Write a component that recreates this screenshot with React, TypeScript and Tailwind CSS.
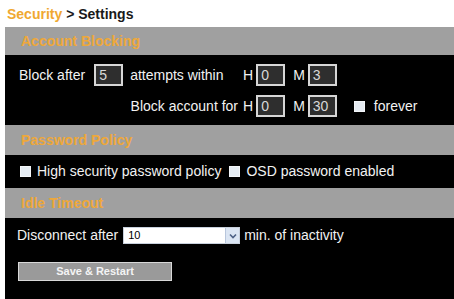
export default function App() {
  const font = { fontFamily: '"Liberation Sans", Arial, sans-serif' };

  return (
    <div className="w-[454px] h-[299px] bg-white pl-[5px] overflow-hidden" style={font}>
      {/* Breadcrumb */}
      <div className="h-[27px] flex items-center pl-[2px] text-[14px] font-bold leading-none">
        <span className="text-[#f0a830]">Security</span>
        <span className="text-[#1a1a1a]">&nbsp;&gt; Settings</span>
      </div>

      <div className="bg-black h-[272px] flex flex-col text-[14px] text-[#f2f2f2]">
        {/* Account Blocking */}
        <SectionHeader title="Account Blocking" h="h-[28px]" />
        <div className="h-[70px] pt-[9px] pl-[14px] flex flex-col gap-[9px]">
          <div className="flex items-center h-[22px]">
            <div className="w-[224px] flex items-center">
              <span>Block after</span>
              <NumBox value="5" className="ml-[9px]" />
              <span className="ml-[7px]">attempts within</span>
            </div>
            <TimeGroup h="0" m="3" />
          </div>
          <div className="flex items-center h-[22px]">
            <div className="w-[224px] flex justify-end pr-[5px]">
              <span>Block account for</span>
            </div>
            <TimeGroup h="0" m="30" />
            <Check className="ml-[17px]" />
            <span className="ml-[9px]">forever</span>
          </div>
        </div>

        {/* Password Policy */}
        <SectionHeader title="Password Policy" h="h-[30px]" />
        <div className="h-[33px] flex items-center pl-[15px]">
          <Check />
          <span className="ml-[6px]">High security password policy</span>
          <Check className="ml-[8px]" />
          <span className="ml-[6px]">OSD password enabled</span>
        </div>

        {/* Idle Timeout */}
        <SectionHeader title="Idle Timeout" h="h-[30px]" />
        <div className="flex-1 pt-[9px] pl-[12px]">
          <div className="flex items-center h-[17px]">
            <span>Disconnect after</span>
            <div className="ml-[5px] w-[117px] h-[17px] bg-white flex items-center border border-[#c8d0dc]">
              <span className="flex-1 pl-[4px] text-[11px] text-black leading-none">10</span>
              <div className="w-[14px] h-[15px] bg-[#dbe5f3] border-l border-[#b8c6dc] flex items-center justify-center">
                <svg width="8" height="6" viewBox="0 0 8 6">
                  <path d="M1 1.5 L4 4.5 L7 1.5" fill="none" stroke="#4d6185" strokeWidth="1.6" />
                </svg>
              </div>
            </div>
            <span className="ml-[4px]">min. of inactivity</span>
          </div>
          <button className="mt-[18px] ml-[1px] w-[154px] h-[19px] bg-[#9a9a9a] border border-[#d8d8d8] text-[11px] font-bold text-[#f4f4f4] flex items-center justify-center leading-none">
            Save &amp; Restart
          </button>
        </div>
      </div>
    </div>
  );
}

function SectionHeader({ title, h }: { title: string; h: string }) {
  return (
    <div className={`${h} bg-[#a0a0a0] flex items-center pl-[16px] text-[14px] font-bold text-[#eea83a]`}>
      {title}
    </div>
  );
}

function NumBox({ value, className = "" }: { value: string; className?: string }) {
  return (
    <div
      className={`w-[29px] h-[22px] bg-[#2e2e2e] border-2 border-[#d6d6d6] flex items-center pl-[3px] text-[14px] text-[#d8d8d8] ${className}`}
    >
      {value}
    </div>
  );
}

function TimeGroup({ h, m }: { h: string; m: string }) {
  return (
    <div className="flex items-center">
      <span>H</span>
      <NumBox value={h} className="ml-[3px]" />
      <span className="ml-[8px]">M</span>
      <NumBox value={m} className="ml-[3px]" />
    </div>
  );
}

function Check({ className = "" }: { className?: string }) {
  return <div className={`w-[11px] h-[11px] bg-[#e6ecf3] border border-[#f4f6f9] ${className}`} />;
}
